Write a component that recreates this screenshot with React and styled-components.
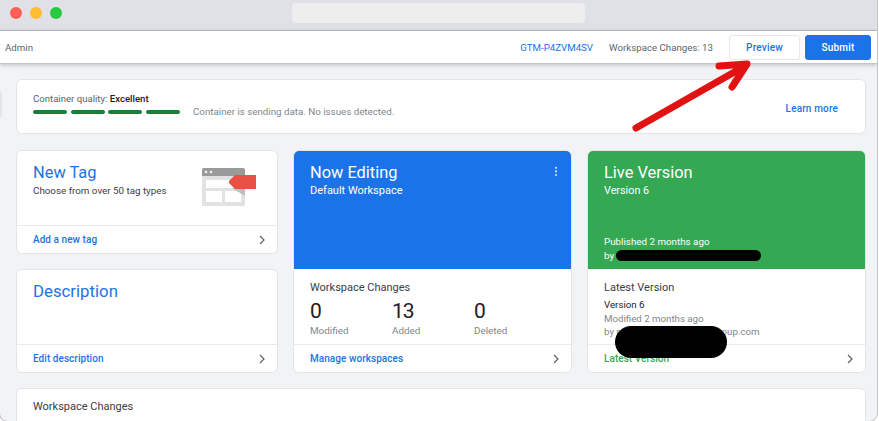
import React from "react";
import styled, { createGlobalStyle } from "styled-components";

const Global = createGlobalStyle`
  html, body { margin: 0; padding: 0; background: #fff; overflow: hidden; }
  * { box-sizing: border-box; }
  body { font-family: Roboto, "Liberation Sans", sans-serif; }
`;

const Page = styled.div`
  position: relative;
  width: 879px;
  height: 421px;
  overflow: hidden;
  background: #fff;
`;
const Window = styled.div`
  width: 879px;
  height: 422px;
  margin-left: -1px;
  background: #f1f3f4;
  border: 1px solid #c4c5c8;
  border-top: 0;
  border-radius: 0 0 9px 9px;
  overflow: hidden;
  display: flex;
  flex-direction: column;
`;
const TitleBar = styled.div`
  height: 31px;
  flex: none;
  background: #e0e1e6;
  border-bottom: 1px solid #b8b9bf;
  display: flex;
  align-items: flex-start;
  padding: 7px 0 0 10px;
`;
const Dot = styled.span`
  width: 12px;
  height: 12px;
  border-radius: 50%;
  background: ${(p) => p.$color};
  margin-right: 8px;
`;
const AddressBar = styled.div`
  width: 293px;
  height: 20px;
  margin: -4px 0 0 222px;
  border-radius: 4px;
  background: #eeeeee;
`;
const Header = styled.header`
  height: 33px;
  flex: none;
  background: #fff;
  border-bottom: 1px solid #c4c5c8;
  box-shadow: 0 1px 4px rgba(60, 64, 67, 0.28);
  display: flex;
  align-items: center;
  padding: 0 6px 0 5px;
  font-size: 9.7px;
  color: #5f6368;
  position: relative;
  z-index: 1;
`;
const Admin = styled.span`
  margin-right: auto;
`;
const ContainerId = styled.span`
  color: #1a73e8;
  margin-right: 16px;
`;
const Changes = styled.span`
  margin-right: 16px;
`;
const HeaderButton = styled.button`
  height: 25px;
  width: ${(p) => p.$width}px;
  margin-left: ${(p) => p.$gap}px;
  border-radius: 3px;
  border: 1px solid ${(p) => (p.$primary ? "#1a73e8" : "#e6e7e8")};
  background: ${(p) => (p.$primary ? "#1a73e8" : "#fff")};
  color: ${(p) => (p.$primary ? "#fff" : "#1a73e8")};
  font: 500 10px Roboto, sans-serif;
  letter-spacing: 0.2px;
  padding: 0;
`;
const Content = styled.main`
  padding: 15px 11px 0 16px;
  display: flex;
  flex-direction: column;
  position: relative;
`;
const Sliver = styled.div`
  position: absolute;
  left: 0;
  top: 28px;
  width: 2px;
  height: 25px;
  background: #e4e5e7;
`;
const Card = styled.section`
  background: #fff;
  border: 1px solid #e3e5e7;
  border-radius: 6px;
  overflow: hidden;
  display: flex;
  flex-direction: column;
`;
const QualityCard = styled(Card)`
  height: 55px;
  flex: none;
  flex-direction: row;
  align-items: center;
  justify-content: space-between;
  padding: 0 27px 2px 16px;
  margin-bottom: 16px;
`;
const QualityLabel = styled.div`
  font-size: 9.6px;
  color: #5f6368;
  line-height: 12px;
  margin-bottom: 1.5px;
  b {
    font-weight: 500;
    color: #202124;
  }
`;
const QualityRow = styled.div`
  display: flex;
  align-items: center;
  font-size: 9.75px;
  line-height: 12px;
  color: #80868b;
`;
const Meter = styled.span`
  width: 34px;
  height: 4px;
  border-radius: 2px;
  background: #188038;
  margin-right: 3.5px;
`;
const MeterText = styled.span`
  margin-left: 10px;
`;
const LearnMore = styled.span`
  font-size: 10px;
  font-weight: 500;
  color: #1a73e8;
  letter-spacing: 0.15px;
  margin-top: 5px;
`;
const Grid = styled.div`
  display: grid;
  grid-template-columns: 262px 279px 279px;
  column-gap: 15px;
  flex: none;
  margin-bottom: 15px;
`;
const LeftColumn = styled.div`
  display: flex;
  flex-direction: column;
  gap: 15px;
`;
const SmallCard = styled(Card)`
  height: 104px;
`;
const TagBody = styled.div`
  flex: 1;
  padding: 10.5px 16px 0;
  display: flex;
  justify-content: space-between;
`;
const TallCard = styled(Card)`
  height: 223px;
`;
const Title = styled.h2`
  margin: 0;
  font-size: ${(p) => p.$size || 16.4}px;
  line-height: 21px;
  font-weight: 400;
  color: ${(p) => p.$color || "#1a73e8"};
`;
const Subtitle = styled.div`
  font-size: ${(p) => p.$size || 9.8}px;
  line-height: 14px;
  margin-top: 1px;
  color: ${(p) => p.$color || "#3c4043"};
`;
const Footer = styled.div`
  height: 28px;
  flex: none;
  border-top: 1px solid #e8eaed;
  display: flex;
  align-items: center;
  justify-content: space-between;
  padding: 0 11.5px 0 16px;
  font-size: 10px;
  font-weight: 500;
  letter-spacing: 0.05px;
  color: ${(p) => p.$color || "#1a73e8"};
`;
const Hero = styled.div`
  height: 118px;
  flex: none;
  background: ${(p) => p.$color};
  padding: 10.5px 15.5px 0 16px;
  color: #fff;
  display: flex;
  flex-direction: column;
  position: relative;
`;
const Kebab = styled.svg`
  position: absolute;
  top: 15px;
  right: 13.5px;
`;
const Published = styled.div`
  margin-top: auto;
  margin-bottom: 6px;
  font-size: 9.8px;
  line-height: 14px;
  color: #fff;
`;
const Redaction = styled.span`
  position: absolute;
  background: #000;
  left: ${(p) => p.$left}px;
  top: ${(p) => p.$top}px;
  width: ${(p) => p.$width}px;
  height: ${(p) => p.$height}px;
  border-radius: ${(p) => p.$radius}px;
  z-index: 2;
`;
const PanelBody = styled.div`
  flex: 1;
  padding: 12px 15.5px 0 16px;
  position: relative;
  min-height: 0;
`;
const PanelTitle = styled.div`
  font-size: 11px;
  line-height: 14px;
  color: #3c4043;
`;
const Stats = styled.div`
  display: grid;
  grid-template-columns: repeat(3, 82px);
  margin-top: 4px;
`;
const StatValue = styled.div`
  font-size: 21px;
  line-height: 24px;
  letter-spacing: -1px;
  color: #202124;
`;
const StatLabel = styled.div`
  font-size: 9.9px;
  line-height: 13px;
  margin-top: 1px;
  color: #80868b;
`;
const VersionLine = styled.div`
  font-size: 9.7px;
  line-height: 13.6px;
  color: ${(p) => p.$color};
  margin-top: ${(p) => p.$gap || 0}px;
`;
const MaskedLine = styled(VersionLine)`
  width: 155.5px;
  display: flex;
  justify-content: space-between;
`;
const WideCard = styled(Card)`
  height: 60px;
  flex: none;
  padding: 11px 16px;
  font-size: 11px;
  line-height: 14px;
  color: #3c4043;
`;
const Arrow = styled.svg`
  position: absolute;
  left: 620px;
  top: 50px;
  z-index: 3;
`;
const Illustration = styled.svg`
  margin: 6px 3px 0 0;
  flex: none;
`;

const Chevron = () => (
  <svg width="8" height="10" viewBox="0 0 8 10" fill="none" aria-hidden="true">
    <path d="M2 1l4 4-4 4" stroke="#5f6368" strokeWidth="1.2" />
  </svg>
);

const TagIllustration = () => (
  <Illustration width="56" height="40" viewBox="0 0 56 40" aria-hidden="true">
    <rect x="0" y="0" width="43" height="38" rx="2" fill="#e1e3e3" />
    <path d="M0 2a2 2 0 0 1 2-2h39a2 2 0 0 1 2 2v6H0z" fill="#9a9a9a" />
    <circle cx="4" cy="4" r="1.3" fill="#f1f1f1" />
    <circle cx="9" cy="4" r="1.3" fill="#f1f1f1" />
    <rect x="4" y="12" width="35" height="8" fill="#fff" />
    <rect x="4" y="23" width="16" height="11" fill="#fff" />
    <rect x="23" y="23" width="16" height="11" fill="#fff" />
    <path d="M30 20h13v8z" fill="#bdbfbf" />
    <path d="M54 7v14H33l-6-6v-2l6-6z" fill="#ea5145" />
  </Illustration>
);

export default function App() {
  return (
    <Page>
      <Global />
      <Window>
        <TitleBar>
          <Dot $color="#ff5f57" />
          <Dot $color="#febc2e" />
          <Dot $color="#28c840" />
          <AddressBar />
        </TitleBar>
        <Header>
          <Admin>Admin</Admin>
          <ContainerId>GTM-P4ZVM4SV</ContainerId>
          <Changes>Workspace Changes: 13</Changes>
          <HeaderButton $width={71} $gap={0}>Preview</HeaderButton>
          <HeaderButton $width={66} $gap={5} $primary>Submit</HeaderButton>
        </Header>
        <Content>
          <Sliver />
          <QualityCard>
            <div>
              <QualityLabel>
                Container quality: <b>Excellent</b>
              </QualityLabel>
              <QualityRow>
                <Meter />
                <Meter />
                <Meter />
                <Meter />
                <MeterText>Container is sending data. No issues detected.</MeterText>
              </QualityRow>
            </div>
            <LearnMore>Learn more</LearnMore>
          </QualityCard>
          <Grid>
            <LeftColumn>
              <SmallCard>
                <TagBody>
                  <div>
                    <Title>New Tag</Title>
                    <Subtitle>Choose from over 50 tag types</Subtitle>
                  </div>
                  <TagIllustration />
                </TagBody>
                <Footer>
                  Add a new tag
                  <Chevron />
                </Footer>
              </SmallCard>
              <SmallCard>
                <TagBody>
                  <Title $size={16.8}>Description</Title>
                </TagBody>
                <Footer>
                  Edit description
                  <Chevron />
                </Footer>
              </SmallCard>
            </LeftColumn>
            <TallCard>
              <Hero $color="#1a73e8">
                <Title $color="#fff">Now Editing</Title>
                <Subtitle $color="#fff" $size={11}>Default Workspace</Subtitle>
                <Kebab width="4" height="11" viewBox="0 0 4 11" aria-hidden="true">
                  <circle cx="2" cy="1.8" r="1.1" fill="#cfe0fa" />
                  <circle cx="2" cy="5.4" r="1.1" fill="#cfe0fa" />
                  <circle cx="2" cy="9" r="1.1" fill="#cfe0fa" />
                </Kebab>
              </Hero>
              <PanelBody>
                <PanelTitle>Workspace Changes</PanelTitle>
                <Stats>
                  <div>
                    <StatValue>0</StatValue>
                    <StatLabel>Modified</StatLabel>
                  </div>
                  <div>
                    <StatValue>13</StatValue>
                    <StatLabel>Added</StatLabel>
                  </div>
                  <div>
                    <StatValue>0</StatValue>
                    <StatLabel>Deleted</StatLabel>
                  </div>
                </Stats>
              </PanelBody>
              <Footer>
                Manage workspaces
                <Chevron />
              </Footer>
            </TallCard>
            <TallCard>
              <Hero $color="#34a853">
                <Title $color="#fff">Live Version</Title>
                <Subtitle $color="#fff" $size={10.8}>Version 6</Subtitle>
                <Published>
                  Published 2 months ago
                  <br />
                  by
                </Published>
                <Redaction $left={28} $top={99} $width={145} $height={11} $radius={6} />
              </Hero>
              <PanelBody>
                <PanelTitle>Latest Version</PanelTitle>
                <VersionLine $color="#202124" $gap={3}>Version 6</VersionLine>
                <VersionLine $color="#80868b">Modified 2 months ago</VersionLine>
                <MaskedLine $color="#80868b">
                  <span>by p</span>
                  <span>oup.com</span>
                </MaskedLine>
                <Redaction $left={27} $top={57} $width={112} $height={32} $radius={16} />
              </PanelBody>
              <Footer $color="#34a853">
                Latest Version
                <Chevron />
              </Footer>
            </TallCard>
          </Grid>
          <WideCard>Workspace Changes</WideCard>
        </Content>
      </Window>
      <Arrow width="140" height="90" viewBox="620 50 140 90" fill="none" aria-hidden="true">
        <path
          d="M636 128L745 66M719 66L747 64L732 87"
          stroke="#e31212"
          strokeWidth="7"
          strokeLinecap="round"
          strokeLinejoin="round"
        />
      </Arrow>
    </Page>
  );
}
